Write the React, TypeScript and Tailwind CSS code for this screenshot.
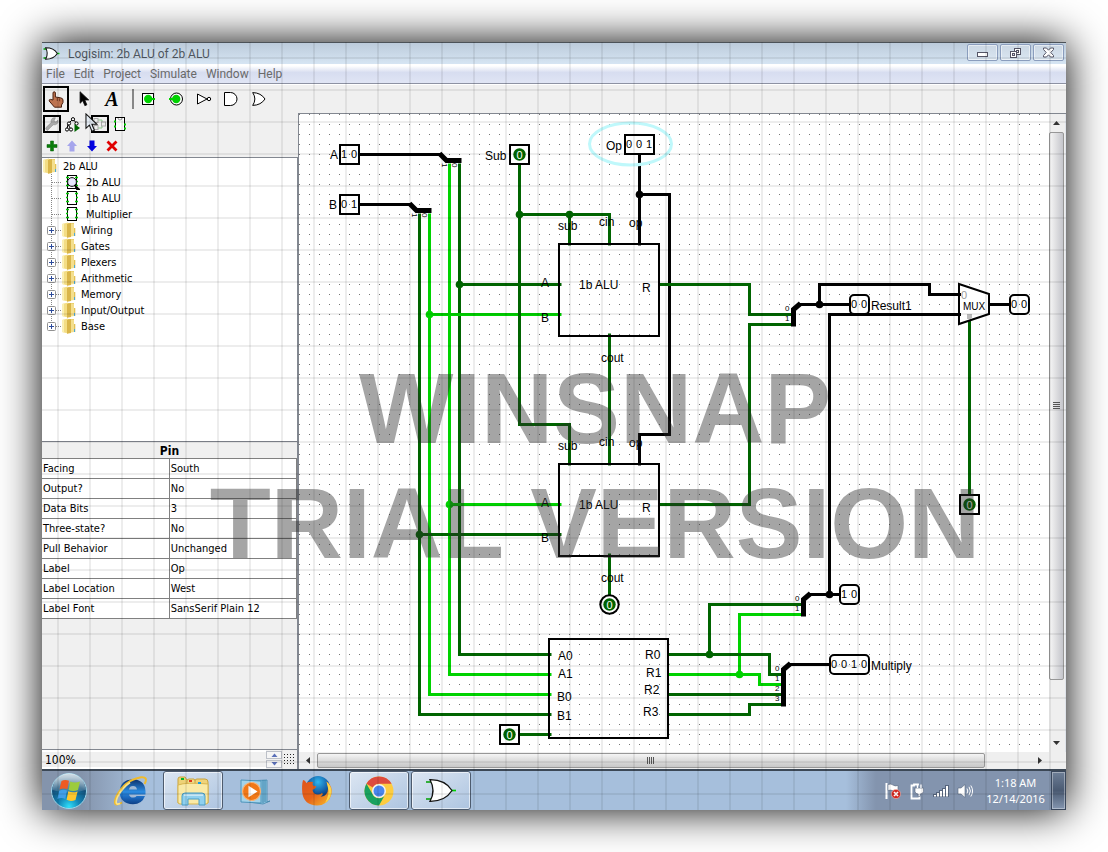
import type { ReactNode } from "react";

const DARK = "#006400";
const BRIGHT = "#00d200";

/* ---------- small icons ---------- */

function GateIcon({ className, weight = 1.3 }: { className?: string; weight?: number }) {
  return (
    <svg viewBox="0 0 32 24" className={className} aria-hidden="true">
      <path d="M1 3.5h6M1 20.5h6" stroke="#00a000" strokeWidth={weight * 1.3} />
      <path d="M26 12h5" stroke="#00d200" strokeWidth={weight * 1.3} />
      <path d="M5 1.2 Q20 1 27 12 Q20 23 5 22.8 Q11 12 5 1.2Z" fill="#fff" stroke="#111" strokeWidth={weight} />
    </svg>
  );
}

function Folder() {
  return (
    <svg width="14" height="16" viewBox="0 0 14 16" aria-hidden="true">
      <path d="M0 2 L6 0.5 V15.5 L0 14Z" fill="#f3dd85" />
      <path d="M0 2 L2 1.5 V14.5 L0 14Z" fill="#fbf0b4" />
      <path d="M6 1 H12 V13 H6Z" fill="#e9cc66" />
      <path d="M5 2 L9 1 V15 L5 15.8Z" fill="#d9b549" />
      <path d="M9 1.5 L12 2 V14 L9 14.6Z" fill="#f4df8e" />
      <path d="M12 6h1.3v8H12z" fill="#e2c055" />
      <path d="M12 11h1v3h-1z" fill="#4aa8d8" />
    </svg>
  );
}

function ChipIcon({ viewed }: { viewed?: boolean }) {
  return (
    <svg width="16" height="16" viewBox="0 0 16 16" aria-hidden="true">
      <path d="M4 1.5h9M4 14.5h9" stroke="#000" />
      <path d="M3.5 1v14M12.5 1v14" stroke="#000" />
      <path d="M2 3.5h3M11 3.5h3M2 7.5h2M12 7.5h2M2 11.5h3M11 11.5h3" stroke="#00c800" strokeWidth="1.4" />
      {viewed && (
        <>
          <circle cx="8" cy="8" r="4.4" fill="#e8e8ff" stroke="#111" />
          <path d="M10.5 11 L13 15.8 H16Z" fill="#000" stroke="#000" strokeWidth="1.2" />
        </>
      )}
    </svg>
  );
}

function HandIcon() {
  return (
    <svg width="16" height="17" viewBox="0 0 16 17" aria-hidden="true">
      <path
        d="M5 9 V2 Q5 0.8 6.2 0.8 Q7.4 0.8 7.4 2 V6 L12.5 6.8 Q15 7.3 15 9 V11.5 L13.5 14 V16.2 H6.5 L1.2 10 Q0.8 8.3 2.6 8.4Z"
        fill="#bd7350"
        stroke="#4a2010"
        strokeWidth="1"
      />
      <path d="M9.3 7v3M11.6 7.4v2.8" stroke="#5c2a17" strokeWidth="0.8" />
    </svg>
  );
}

function ArrowCursor({ fill, size }: { fill: string; size: "s" | "l" }) {
  return (
    <svg
      className={size === "s" ? "h-[16px] w-[11px]" : "h-[20px] w-[13px]"}
      viewBox="0 0 11 17"
      aria-hidden="true"
    >
      <path
        d="M0.8 0.8 V13 L3.7 10.3 L5.9 15.6 L8 14.7 L5.8 9.5 H10Z"
        fill={fill}
        stroke="#111"
        strokeWidth="0.9"
      />
    </svg>
  );
}

function PinIcon({ output }: { output?: boolean }) {
  return (
    <svg width="16" height="16" viewBox="0 0 16 16" aria-hidden="true">
      {output ? (
        <circle cx="8.5" cy="8" r="6" fill="#fff" stroke="#000" />
      ) : (
        <rect x="2.5" y="2.5" width="11" height="11" fill="#fff" stroke="#000" />
      )}
      <circle cx="8.2" cy="8" r="4.2" fill={BRIGHT} />
      <path d={output ? "M1 8h4" : "M11 8h4"} stroke={BRIGHT} strokeWidth="2" />
    </svg>
  );
}

function NotIcon() {
  return (
    <svg width="16" height="14" viewBox="0 0 16 14" aria-hidden="true">
      <path d="M1.5 2 V12 L11 7Z" fill="#fff" stroke="#000" />
      <circle cx="13" cy="7" r="1.7" fill="#fff" stroke="#000" />
    </svg>
  );
}

function AndIcon() {
  return (
    <svg width="16" height="14" viewBox="0 0 16 14" aria-hidden="true">
      <path d="M1 0.5 H6.5 A6.5 6.5 0 0 1 6.5 13.5 H0.5 V0.5Z" fill="#fff" stroke="#000" />
    </svg>
  );
}

function OrIcon() {
  return (
    <svg width="16" height="14" viewBox="0 0 16 14" aria-hidden="true">
      <path d="M0.7 0.6 Q9 0.8 13 7 Q9 13.2 0.7 13.4 Q5 7 0.7 0.6Z" fill="#fff" stroke="#000" />
    </svg>
  );
}

function WrenchIcon() {
  return (
    <svg width="14" height="14" viewBox="0 0 14 14" aria-hidden="true">
      <path
        d="M13 3.2 L10.8 5 L9 3.6 L10.4 0.8 Q6.5 0.4 6 4.2 L6.2 5.6 L0.8 10.8 Q0.2 12.6 2.4 13.4 L8.2 7.8 Q13.2 8.4 13 3.2Z"
        fill="#aaa"
        stroke="#888"
        strokeWidth="0.6"
      />
    </svg>
  );
}

function SimTreeIcon() {
  return (
    <svg width="15" height="15" viewBox="0 0 15 15" aria-hidden="true">
      <path d="M8 2 L3 7 L2 12 M3 7 L5.5 12 M8 2 L12 7" stroke="#000" fill="none" />
      <g fill="#fff" stroke="#000">
        <circle cx="8" cy="2.2" r="1.6" />
        <circle cx="4" cy="6.5" r="1.6" />
        <circle cx="11.5" cy="6.5" r="1.6" />
        <circle cx="2" cy="12.5" r="1.6" />
        <circle cx="6" cy="12.5" r="1.6" />
      </g>
      <path d="M9.5 7 L15 11 L9.5 15Z" fill="#006800" />
    </svg>
  );
}

function LayoutIcon() {
  return (
    <svg width="14" height="14" viewBox="0 0 14 14" aria-hidden="true">
      <path d="M4 3h5v4h4M4 11h5V7" stroke="#8cc88c" fill="none" />
      <g fill="#eee" stroke="#aaa">
        <rect x="1" y="1.5" width="4" height="4" />
        <rect x="1" y="8.5" width="4" height="4" />
        <rect x="8.5" y="5" width="4" height="4" />
      </g>
    </svg>
  );
}

function AppearanceIcon() {
  return (
    <svg width="14" height="14" viewBox="0 0 14 14" aria-hidden="true">
      <rect x="2.5" y="0.5" width="9" height="13" fill="#fff" stroke="#000" />
      <path d="M5 1 a2 2 0 0 0 4 0" fill="none" stroke="#999" />
      <path d="M1 4.5h2M1 9.5h2M11 7.5h2M11 11.5h2" stroke={BRIGHT} strokeWidth="2" />
    </svg>
  );
}

/* ---------- chrome ---------- */

function CaptionButton({ label, children }: { label: string; children: ReactNode }) {
  return (
    <button
      aria-label={label}
      className="flex h-[17px] w-[31px] items-center justify-center rounded-xs border border-[#8a9dbd] bg-white/20 shadow-[inset_0_0_0_1px_rgba(255,255,255,0.5)]"
    >
      {children}
    </button>
  );
}

function TitleBar() {
  return (
    <header className="flex h-[22px] items-start justify-between border-t border-[#4c5258] bg-linear-to-b from-[#bccbdb] to-[#d6e5f3] pr-[2px] pl-px">
      <div className="flex h-[21px] items-center gap-2">
        <GateIcon className="h-[15px] w-[17px]" weight={2} />
        <h1 className="text-[12px] leading-4 text-[#4f565e]">Logisim: 2b ALU of 2b ALU</h1>
      </div>
      <div className="flex gap-[2px] pt-px">
        <CaptionButton label="Minimize">
          <svg width="13" height="11" viewBox="0 0 13 11">
            <rect x="1.5" y="5.5" width="10" height="4" fill="#fff" stroke="#556" />
          </svg>
        </CaptionButton>
        <CaptionButton label="Restore">
          <svg width="13" height="12" viewBox="0 0 13 12">
            <rect x="5.5" y="1.5" width="6" height="6" fill="#fff" stroke="#556" />
            <rect x="7.5" y="3.5" width="2" height="2" fill="none" stroke="#556" />
            <rect x="1.5" y="4.5" width="6" height="6" fill="#fff" stroke="#556" />
            <rect x="3.5" y="6.5" width="2" height="2" fill="#dde" stroke="#556" />
          </svg>
        </CaptionButton>
        <CaptionButton label="Close">
          <svg width="13" height="11" viewBox="0 0 13 11">
            <path
              d="M1.5 1 H4.5 L6.5 3.2 L8.5 1 H11.5 V2.5 L8.8 5.5 L11.5 8.5 V10 H8.5 L6.5 7.8 L4.5 10 H1.5 V8.5 L4.2 5.5 L1.5 2.5Z"
              fill="#fff"
              stroke="#556"
            />
          </svg>
        </CaptionButton>
      </div>
    </header>
  );
}

const MENUS = ["File", "Edit", "Project", "Simulate", "Window", "Help"];

function MenuBar() {
  return (
    <nav className="flex h-[20px] items-center gap-[9px] border-b border-[#8d92a3] bg-linear-to-b from-white from-10% via-[#d7ddf0] via-45% to-[#e0e5f5] pl-1">
      {MENUS.map((m) => (
        <button key={m} className="text-[12px] leading-4 text-[#6a6a6a]">
          {m}
        </button>
      ))}
    </nav>
  );
}

function Tool({ label, selected, children }: { label: string; selected?: boolean; children: ReactNode }) {
  return (
    <div className="flex w-7 justify-center">
      <button
        aria-label={label}
        className={
          "flex size-[26px] items-center justify-center " + (selected ? "border-2 border-black" : "")
        }
      >
        {children}
      </button>
    </div>
  );
}

function ToolBar() {
  return (
    <div className="flex h-[29px] items-center border-t border-white bg-[#f0f0f0]">
      <Tool label="Poke tool" selected>
        <HandIcon />
      </Tool>
      <Tool label="Edit tool">
        <ArrowCursor fill="#000" size="s" />
      </Tool>
      <Tool label="Text tool">
        <span className="font-['Liberation_Serif',serif] text-[20px] leading-5 font-bold italic">A</span>
      </Tool>
      <div className="flex w-2 justify-end">
        <div className="h-5 w-[2px] bg-[#888]" />
      </div>
      <Tool label="Input pin">
        <PinIcon />
      </Tool>
      <Tool label="Output pin">
        <PinIcon output />
      </Tool>
      <Tool label="NOT gate">
        <NotIcon />
      </Tool>
      <Tool label="AND gate">
        <AndIcon />
      </Tool>
      <Tool label="OR gate">
        <OrIcon />
      </Tool>
    </div>
  );
}

function SmallTool({ label, selected, children }: { label: string; selected?: boolean; children: ReactNode }) {
  return (
    <button
      aria-label={label}
      className={"flex size-[18px] items-center justify-center " + (selected ? "border-2 border-black" : "")}
    >
      {children}
    </button>
  );
}

function ExplorerTools() {
  return (
    <div className="bg-[#f0f0f0]">
      <div className="relative flex h-[22px] items-center gap-[2px] pl-px">
        <SmallTool label="Show toolbox" selected>
          <WrenchIcon />
        </SmallTool>
        <SmallTool label="Show simulation tree">
          <SimTreeIcon />
        </SmallTool>
        <div className="w-[6px]" />
        <SmallTool label="Edit circuit layout" selected>
          <LayoutIcon />
        </SmallTool>
        <SmallTool label="Edit appearance">
          <AppearanceIcon />
        </SmallTool>
        <div className="absolute top-0 left-[43px]">
          <ArrowCursor fill="#e4ecf4" size="l" />
        </div>
      </div>
      <div className="flex h-[22px] items-center gap-[2px] pl-px">
        <SmallTool label="Add circuit">
          <svg width="12" height="12" viewBox="0 0 12 12">
            <path d="M4.5 1h3v3.5H11v3H7.5V11h-3V7.5H1v-3h3.5z" fill="#0a7d0a" stroke="#075f07" strokeWidth="0.5" />
          </svg>
        </SmallTool>
        <SmallTool label="Move up">
          <svg width="12" height="12" viewBox="0 0 12 12">
            <path d="M6 0.5 L11 6 H8.5 V11.5 H3.5 V6 H1Z" fill="#a5a5ec" />
          </svg>
        </SmallTool>
        <SmallTool label="Move down">
          <svg width="12" height="12" viewBox="0 0 12 12">
            <path d="M6 11.5 L11 6 H8.5 V0.5 H3.5 V6 H1Z" fill="#0000e0" />
          </svg>
        </SmallTool>
        <SmallTool label="Remove circuit">
          <svg width="12" height="12" viewBox="0 0 12 12">
            <path d="M1.5 1.5 L10.5 10.5 M10.5 1.5 L1.5 10.5" stroke="#e00000" strokeWidth="2.8" />
          </svg>
        </SmallTool>
      </div>
    </div>
  );
}

function Connector({ expandable, last }: { expandable?: boolean; last?: boolean }) {
  return (
    <svg width="16" height="16" viewBox="0 0 16 16" aria-hidden="true">
      <path d={last ? "M5.5 0V8" : "M5.5 0V16"} stroke="#888" strokeDasharray="1 1" />
      <path d="M6 8.5H16" stroke="#888" strokeDasharray="1 1" />
      {expandable && (
        <>
          <rect x="1.5" y="4.5" width="8" height="8" rx="1" fill="#fff" stroke="#919191" />
          <path d="M3 8.5H8M5.5 6V11" stroke="#2b4a9b" />
        </>
      )}
    </svg>
  );
}

const CIRCUITS = ["2b ALU", "1b ALU", "Multiplier"];
const LIBRARIES = ["Wiring", "Gates", "Plexers", "Arithmetic", "Memory", "Input/Output", "Base"];

function ExplorerTree() {
  return (
    <div className="h-[284px] border-t border-r border-[#828790] bg-white pl-px">
      <div className="flex h-4 items-center gap-[6px]">
        <Folder />
        <span className="pt-[2px]">2b ALU</span>
      </div>
      <ul className="pl-[3px]">
        {CIRCUITS.map((c, i) => (
          <li key={c} className="flex h-4 items-center">
            <Connector />
            <span className="flex w-6 justify-center pr-1">
              <ChipIcon viewed={i === 0} />
            </span>
            <span className="pt-[2px]">{c}</span>
          </li>
        ))}
        {LIBRARIES.map((c, i) => (
          <li key={c} className="flex h-4 items-center">
            <Connector expandable last={i === LIBRARIES.length - 1} />
            <span className="flex w-[19px]">
              <Folder />
            </span>
            <span className="pt-[2px]">{c}</span>
          </li>
        ))}
      </ul>
    </div>
  );
}

const ATTRS: [string, string][] = [
  ["Facing", "South"],
  ["Output?", "No"],
  ["Data Bits", "3"],
  ["Three-state?", "No"],
  ["Pull Behavior", "Unchanged"],
  ["Label", "Op"],
  ["Label Location", "West"],
  ["Label Font", "SansSerif Plain 12"],
];

function AttributePanel() {
  return (
    <div className="flex-1 border-t border-r border-[#828790] bg-[#f0f0f0]">
      <h2 className="h-4 text-center text-[12px] leading-[18px] font-bold">Pin</h2>
      <table className="w-full table-fixed border-collapse bg-white">
        <tbody>
          {ATTRS.map(([k, v]) => (
            <tr key={k} className="h-5 border-y border-[#808080]">
              <th scope="row" className="border-r border-[#808080] p-0 pl-px text-left font-normal">
                {k}
              </th>
              <td className="border-r border-[#808080] p-0 pl-px">{v}</td>
            </tr>
          ))}
        </tbody>
      </table>
    </div>
  );
}

function ZoomControl() {
  return (
    <div className="flex h-5 items-stretch border-t border-[#828790] bg-[#f0f0f0]">
      <input
        aria-label="Zoom"
        defaultValue="100%"
        className="min-w-0 flex-1 border-y-2 border-white bg-[#f0f0f0] pl-[3px] text-[12px] leading-4"
      />
      <div className="flex w-4 flex-col justify-center gap-px">
        <button aria-label="Zoom in" className="flex h-2 items-center justify-center border border-[#bcc0c8] bg-[#f5f5f5]">
          <svg width="7" height="4" viewBox="0 0 7 4">
            <path d="M0.5 4 L3.5 0.5 L6.5 4Z" fill="#5a6fb8" />
          </svg>
        </button>
        <button aria-label="Zoom out" className="flex h-2 items-center justify-center border border-[#bcc0c8] bg-[#f5f5f5]">
          <svg width="7" height="4" viewBox="0 0 7 4">
            <path d="M0.5 0 L3.5 3.5 L6.5 0Z" fill="#5a6fb8" />
          </svg>
        </button>
      </div>
      <button aria-label="Show grid" className="flex w-4 items-center justify-center border-r border-[#828790]">
        <svg width="13" height="11" viewBox="0 0 13 11">
          {[0, 1, 2, 3].map((r) =>
            [0, 1, 2, 3].map((c) => <rect key={r * 5 + c} x={1 + c * 3} y={r * 3} width="1" height="1" fill="#222" />)
          )}
        </svg>
      </button>
    </div>
  );
}

/* ---------- circuit ---------- */

function Wire({ d, c = "#000", w = 3 }: { d: string; c?: string; w?: number }) {
  return <path d={d} stroke={c} strokeWidth={w} fill="none" />;
}

function Value({ x, y, bits, round }: { x: number; y: number; bits: string; round?: boolean }) {
  return (
    <g>
      <rect
        x={x + 1}
        y={y + 1}
        width={bits.length * 10 - 1}
        height="19"
        rx={round ? 4 : 0}
        fill="none"
        stroke="#000"
        strokeWidth="2"
      />
      {bits.split("").map((b, i) => (
        <text key={i} x={x + 5 + i * 10} y={y + 14} textAnchor="middle" fontSize="11">
          {b}
        </text>
      ))}
    </g>
  );
}

function BitPin({ x, y, output }: { x: number; y: number; output?: boolean }) {
  return (
    <g>
      {output ? (
        <circle cx={x} cy={y} r="9.2" fill="#fff" stroke="#000" strokeWidth="2" />
      ) : (
        <rect x={x - 9.5} y={y - 9.5} width="19" height="19" fill="none" stroke="#000" strokeWidth="2" />
      )}
      <circle cx={x} cy={y} r="6.2" fill={DARK} />
      <text x={x} y={y + 4} textAnchor="middle" fill="#fff" fontSize="11">
        0
      </text>
    </g>
  );
}

function Alu({ y }: { y: number }) {
  return (
    <g>
      <rect x="559" y={y} width="100" height="92" fill="none" stroke="#000" strokeWidth="2" />
      <text x="558" y={y - 14}>sub</text>
      <text x="599" y={y - 18}>cin</text>
      <text x="629" y={y - 17}>op</text>
      <text x="541" y={y + 43}>A</text>
      <text x="541" y={y + 78}>B</text>
      <text x="579" y={y + 45}>1b ALU</text>
      <text x="642" y={y + 48}>R</text>
      <text x="601" y={y + 118}>cout</text>
    </g>
  );
}

function Dot({ x, y, c }: { x: number; y: number; c: string }) {
  return <circle cx={x} cy={y} r="3.8" fill={c} />;
}

function Circuit() {
  return (
    <svg
      className="h-full w-full bg-white font-['Liberation_Sans',Arial,sans-serif]"
      fontSize="12"
      role="img"
      aria-label="2b ALU circuit"
    >
      <defs>
        <pattern id="dots" width="10" height="10" patternUnits="userSpaceOnUse">
          <rect x="0" y="0" width="1" height="1" fill="#777" />
        </pattern>
      </defs>
      <rect width="743" height="100%" fill="url(#dots)" />
      <g transform="translate(-299 -114)">
        <g transform="translate(0.5 0.5)">
          <Wire d="M359 154H440" />
          <Wire d="M359 204H410" />
          <Wire d="M439 153L446 160H461" w={5} />
          <Wire d="M409 203L416 210H431" w={5} />
          <Wire d="M459 163V654H551" c={DARK} />
          <Wire d="M449 163V674H551" c={BRIGHT} />
          <Wire d="M429 213V694H551" c={BRIGHT} />
          <Wire d="M419 213V714H551" c={DARK} />
          <Wire d="M459 284H561" c={DARK} />
          <Wire d="M429 314H561" c={BRIGHT} />
          <Wire d="M449 504H561" c={BRIGHT} />
          <Wire d="M419 534H561" c={DARK} />
          <Wire d="M519 164V424H569V465" c={DARK} />
          <Wire d="M519 214H609V245" c={DARK} />
          <Wire d="M569 214V245" c={DARK} />
          <Wire d="M609 333V465" c={DARK} />
          <Wire d="M609 553V595" c={DARK} />
          <Wire d="M639 154V245" />
          <Wire d="M639 194H669V434H639V465" />
          <Wire d="M658 284H749V314H792" c={DARK} />
          <Wire d="M658 504H749V324H792" c={DARK} />
          <Wire d="M793 326V309L800 303" w={5} />
          <Wire d="M798 304H849" />
          <Wire d="M819 304V284H929V294H960" />
          <Wire d="M960 314H829V594" />
          <Wire d="M989 304H1009" />
          <Wire d="M969 320V494" c={DARK} />
          <Wire d="M709 654V604H802" c={DARK} />
          <Wire d="M739 674V614H802" c={BRIGHT} />
          <Wire d="M803 616V599L810 593" w={5} />
          <Wire d="M808 594H839" />
          <Wire d="M668 654H769V674H782" c={DARK} />
          <Wire d="M668 674H759V684H782" c={BRIGHT} />
          <Wire d="M668 694H782" c={DARK} />
          <Wire d="M668 714H749V704H782" c={DARK} />
          <Wire d="M783 706V669L790 663" w={5} />
          <Wire d="M788 664H829" />
          <Wire d="M519 734H551" c={DARK} />
          <Dot x={459} y={284} c={DARK} />
          <Dot x={429} y={314} c={BRIGHT} />
          <Dot x={449} y={504} c={BRIGHT} />
          <Dot x={419} y={534} c={DARK} />
          <Dot x={519} y={214} c={DARK} />
          <Dot x={569} y={214} c={DARK} />
          <Dot x={639} y={194} c="#000" />
          <Dot x={819} y={304} c="#000" />
          <Dot x={829} y={594} c="#000" />
          <Dot x={709} y={654} c={DARK} />
          <Dot x={739} y={674} c={BRIGHT} />
        </g>
        <ellipse cx="630.5" cy="144" rx="41" ry="21" fill="none" stroke="#bff8fb" strokeWidth="3" />
        <Alu y={244} />
        <Alu y={464} />
        <rect x="549" y="639" width="119" height="99" fill="none" stroke="#000" strokeWidth="2" />
        <path d="M959 284L989 294V314L959 324Z" fill="#fff" stroke="#000" strokeWidth="2" />
        <Wire d="M958 294.5H961M958 314.5H961" />
        <rect x="967" y="314" width="5" height="5" fill="#bbb" />
        <text x="961" y="299" fill="#999" fontSize="11">0</text>
        <text x="963" y="310" fontSize="10">MUX</text>
        <Value x={339} y={144} bits="10" />
        <Value x={339} y={194} bits="01" />
        <Value x={624} y={134} bits="001" />
        <Value x={849} y={294} bits="00" round />
        <Value x={1009} y={294} bits="00" round />
        <Value x={839} y={584} bits="10" round />
        <Value x={829} y={654} bits="0010" round />
        <BitPin x={519.5} y={154.5} />
        <BitPin x={969.5} y={504.5} />
        <BitPin x={509.5} y={734.5} />
        <BitPin x={609.5} y={604.5} output />
        <text x="330" y="159">A</text>
        <text x="329" y="209">B</text>
        <text x="485" y="160">Sub</text>
        <text x="606" y="150">Op</text>
        <text x="871" y="310">Result1</text>
        <text x="871" y="670">Multiply</text>
        <text x="558" y="660">A0</text>
        <text x="558" y="678">A1</text>
        <text x="557" y="701">B0</text>
        <text x="557" y="720">B1</text>
        <text x="645" y="659">R0</text>
        <text x="646" y="677">R1</text>
        <text x="644" y="694">R2</text>
        <text x="643" y="716">R3</text>
        <g fontSize="8">
          <text transform="translate(442 163) rotate(90)">1</text>
          <text transform="translate(452 163) rotate(90)">0</text>
          <text transform="translate(412 213) rotate(90)">1</text>
          <text transform="translate(422 213) rotate(90)">0</text>
          <text x="785" y="311">0</text>
          <text x="785" y="321">1</text>
          <text x="795" y="601">0</text>
          <text x="795" y="611">1</text>
          <text x="775" y="671">0</text>
          <text x="775" y="681">1</text>
          <text x="775" y="691">2</text>
          <text x="775" y="701">3</text>
        </g>
      </g>
    </svg>
  );
}

/* ---------- scroll bars ---------- */

function VScroll() {
  return (
    <div className="flex w-[17px] flex-col border-r border-[#dfe3ea] bg-[#efefef] pr-px">
      <button aria-label="Scroll up" className="flex h-[18px] items-center justify-center">
        <svg width="7" height="4" viewBox="0 0 7 4">
          <path d="M0 4 L3.5 0 L7 4Z" fill="#333" />
        </svg>
      </button>
      <div className="flex-1">
        <div className="flex h-[91%] items-center justify-center rounded-xs border border-[#979797] bg-linear-to-r from-[#f5f5f5] via-[#e2e2e4] via-40% to-[#c4c5cb]">
          <div className="flex flex-col gap-px">
            <div className="h-px w-[7px] bg-[#555]" />
            <div className="h-px w-[7px] bg-[#555]" />
            <div className="h-px w-[7px] bg-[#555]" />
            <div className="h-px w-[7px] bg-[#555]" />
          </div>
        </div>
      </div>
      <button aria-label="Scroll down" className="flex h-[18px] items-center justify-center">
        <svg width="7" height="4" viewBox="0 0 7 4">
          <path d="M0 0 L3.5 4 L7 0Z" fill="#333" />
        </svg>
      </button>
    </div>
  );
}

function HScroll() {
  return (
    <div className="flex h-[17px] bg-[#efefef] pt-px pr-[17px] pb-px">
      <button aria-label="Scroll left" className="flex w-[18px] items-center justify-center">
        <svg width="4" height="7" viewBox="0 0 4 7">
          <path d="M4 0 L0 3.5 L4 7Z" fill="#333" />
        </svg>
      </button>
      <div className="flex-1">
        <div className="flex h-full w-[93.5%] items-center justify-center rounded-xs border border-[#979797] bg-linear-to-b from-[#f5f5f5] via-[#dcdcdc] via-50% to-[#c8c8c8]">
          <div className="flex gap-px">
            <div className="h-[7px] w-px bg-[#555]" />
            <div className="h-[7px] w-px bg-[#555]" />
            <div className="h-[7px] w-px bg-[#555]" />
            <div className="h-[7px] w-px bg-[#555]" />
          </div>
        </div>
      </div>
      <button aria-label="Scroll right" className="flex w-[18px] items-center justify-center">
        <svg width="4" height="7" viewBox="0 0 4 7">
          <path d="M0 0 L4 3.5 L0 7Z" fill="#333" />
        </svg>
      </button>
    </div>
  );
}

/* ---------- task bar ---------- */

function StartOrb() {
  return (
    <svg width="38" height="38" viewBox="0 0 38 38" aria-hidden="true">
      <defs>
        <radialGradient id="orb" cx="50%" cy="95%" r="85%">
          <stop offset="0" stopColor="#2fe0fb" />
          <stop offset="0.35" stopColor="#1387b8" />
          <stop offset="0.75" stopColor="#14507a" />
          <stop offset="1" stopColor="#4b7a9a" />
        </radialGradient>
        <linearGradient id="orbTop" x1="0" y1="0" x2="0" y2="1">
          <stop offset="0" stopColor="#fff" stopOpacity="0.75" />
          <stop offset="1" stopColor="#fff" stopOpacity="0.1" />
        </linearGradient>
      </defs>
      <circle cx="19" cy="19" r="17.5" fill="url(#orb)" stroke="#9fd4e8" strokeWidth="1" />
      <path d="M2.5 18 A16.5 16.5 0 0 1 35.5 18 Q19 23 2.5 18Z" fill="url(#orbTop)" />
      <path d="M11.5 9 Q15 7 19 8.8 L17.3 17.2 Q13.5 15.5 9.5 17.5Z" fill="#ee5a24" />
      <path d="M20.3 9.5 Q24.5 11.5 30 9.6 L28 18 Q23 20 18.6 18Z" fill="#9ccc3c" />
      <path d="M9.2 18.8 Q13 17 17 18.5 L15.3 27 Q11.5 25.2 7.3 27Z" fill="#3f9fe8" />
      <path d="M18.3 19.2 Q22.5 21.3 27.6 19.4 L25.5 28 Q20.5 30 16.6 27.8Z" fill="#fdc72e" />
    </svg>
  );
}

function IeIcon() {
  return (
    <svg width="34" height="32" viewBox="0 0 34 32" aria-hidden="true">
      <defs>
        <linearGradient id="ie" x1="0" y1="0" x2="0" y2="1">
          <stop offset="0" stopColor="#0c2f6a" />
          <stop offset="0.5" stopColor="#2b8be0" />
          <stop offset="0.75" stopColor="#1a66bb" />
          <stop offset="1" stopColor="#0d3f86" />
        </linearGradient>
      </defs>
      <path
        d="M31.5 19.5 H15 Q15.6 22.6 19.2 22.6 Q21.6 22.6 22.6 21 H31 Q28 29.2 19 29.2 Q6 28.6 5.6 17 Q6 5 18.8 4.2 Q32.5 4.8 31.5 19.5Z M15 14.4 H23 Q22.4 11 19 11 Q15.6 11 15 14.4Z"
        fill="url(#ie)"
        fillRule="evenodd"
      />
      <path d="M8 27.5 Q-2.5 33.5 2.6 21 Q11 5 27 2.2 Q34.5 1.5 30.6 9" fill="none" stroke="#efbb2c" strokeWidth="2" />
      <path d="M6 28.6 Q0 31 3.5 22 Q8 13 16 7.5" fill="none" stroke="#f9e38a" strokeWidth="1.6" />
    </svg>
  );
}

function ExplorerIcon() {
  return (
    <svg width="34" height="32" viewBox="0 0 34 32" aria-hidden="true">
      <path d="M2 4 Q2 2 4 2 H9 L11 5 H13 V28 H2Z" fill="#eed277" stroke="#c9a33d" />
      <path d="M11 6 Q11 4 13 4 H18 L20 7 H23 V28 H11Z" fill="#f3dc8b" stroke="#c9a33d" />
      <path d="M19 6 Q19 4 21 4 H29 Q32 4 32 7 V28 H19Z" fill="#efd37a" stroke="#c9a33d" />
      <path d="M2 10 Q10 7 32 9 V27 Q32 29 30 29 H4 Q2 29 2 27Z" fill="#faeaa6" stroke="#d8b650" />
      <rect x="5" y="3" width="3" height="2" fill="#00b52a" />
      <rect x="13" y="5" width="3" height="2" fill="#e23a1a" />
      <rect x="22" y="7" width="3" height="2" fill="#139fe6" />
      <path d="M6 30 V21 Q6 18 9 18 H26 Q29 18 29 21 V30 H23 V24 H12 V30Z" fill="#8fd0ee" stroke="#4a9ec6" />
      <path d="M8 20h19" stroke="#d7f1fc" strokeWidth="1.5" />
    </svg>
  );
}

function PlayerIcon() {
  return (
    <svg width="32" height="28" viewBox="0 0 32 28" aria-hidden="true">
      <path d="M10 4 L28 3 V25 L31 24 L24 27 L10 25Z" fill="#8cc3df" stroke="#4288ad" strokeWidth="0.8" />
      <path d="M24 3v23M26 3v22" stroke="#3d86ae" />
      <path d="M2 3 L22 4 V26 L2 25Z" fill="#a3d3ea" stroke="#4d94ba" />
      <circle cx="12.5" cy="14.5" r="9" fill="#f07818" stroke="#fbb171" strokeWidth="1.2" />
      <path d="M9.5 8.8 L18.5 14.5 L9.5 20.3Z" fill="#fff" />
    </svg>
  );
}

function FirefoxIcon() {
  return (
    <svg width="32" height="32" viewBox="0 0 32 32" aria-hidden="true">
      <defs>
        <radialGradient id="globe" cx="50%" cy="25%" r="75%">
          <stop offset="0" stopColor="#2fb6ee" />
          <stop offset="0.55" stopColor="#1560a8" />
          <stop offset="1" stopColor="#0a2352" />
        </radialGradient>
        <linearGradient id="fox" x1="0" y1="0" x2="1" y2="1">
          <stop offset="0" stopColor="#e0531a" />
          <stop offset="0.5" stopColor="#e5641a" />
          <stop offset="1" stopColor="#fbc02c" />
        </linearGradient>
      </defs>
      <circle cx="17" cy="13" r="12" fill="url(#globe)" />
      <path
        d="M2 5 Q4 5 5.5 8 Q8 6 12 7 Q11 8.5 12 10.5 L15.5 11.5 Q14 14 11.5 14.8 Q12 19 16 19.5 Q19 20 21 18 Q23 19.5 19.5 21.5 Q24 22 26.5 17 Q28 12 25.5 6.5 Q32 11 30.5 19 Q28 30 16 30.5 Q3 30 1.3 18 Q0.6 10 2 5Z"
        fill="url(#fox)"
      />
      <path d="M25.5 6.5 Q31 11 30.3 18 Q29 25 24 28 Q29 19 26.8 12Z" fill="#fbd64a" />
    </svg>
  );
}

function ChromeIcon() {
  return (
    <svg width="30" height="30" viewBox="-15 -15 30 30" aria-hidden="true">
      <circle r="14.5" fill="#fdcc40" />
      <path d="M-12.56 -7.25 A14.5 14.5 0 0 1 12.56 -7.25 H0 A7 7 0 0 0 -6.1 -3.5Z" fill="#dd4b3e" />
      <path d="M-12.56 -7.25 A14.5 14.5 0 0 0 0 14.5 L6.2 3.6 A7 7 0 0 1 -6.2 3.6Z" fill="#1aa15f" />
      <circle r="7" fill="#f4f4f4" />
      <circle r="5.5" fill="#4a86ee" />
    </svg>
  );
}

function TaskButton({ label, active, children }: { label: string; active?: boolean; children: ReactNode }) {
  return (
    <button
      aria-label={label}
      className={
        "flex h-[39px] w-[60px] items-center justify-center rounded-[3px] " +
        (active
          ? "border border-[#4d5b6e] bg-linear-to-br from-[#dce6f2] to-[#adc4e0] shadow-[inset_0_0_0_1px_rgba(255,255,255,0.6)]"
          : "")
      }
    >
      {children}
    </button>
  );
}

function Tray() {
  return (
    <div className="flex h-full items-center">
      <div className="flex items-center gap-2">
        <svg width="16" height="18" viewBox="0 0 16 18" aria-label="Action Center">
          <path d="M1.5 1V17" stroke="#fff" strokeWidth="2" />
          <path d="M3 2.5 Q6 1.5 8 3 T13 3.5 V9 Q10 10 8 8.8 T3 8.5Z" fill="#fff" stroke="#56657d" strokeWidth="0.6" />
          <circle cx="11" cy="12" r="4.6" fill="#d22a22" stroke="#f3b5ae" strokeWidth="0.6" />
          <path d="M9 10l4 4M13 10l-4 4" stroke="#fff" strokeWidth="1.6" />
        </svg>
        <svg width="16" height="18" viewBox="0 0 16 18" aria-label="Power">
          <path d="M9 3.5V2.5H5V3.5H2.5V16.5H10.5V14" fill="none" stroke="#fff" strokeWidth="1.8" />
          <path d="M6 6 H14.5 V9.5 Q14 12 11.2 12 V14.5 H9.2 V12 Q6.4 12 6 9.5Z" fill="#fff" stroke="#56657d" strokeWidth="0.6" />
          <path d="M8.5 6V2.5M12 6V2.5" stroke="#fff" strokeWidth="1.4" />
        </svg>
        <svg width="16" height="14" viewBox="0 0 16 14" aria-label="Network">
          <path
            d="M0 10h3v3H0zM3 8h3v5H3zM6 6h3v7H6zM9 4h3v9H9zM12 1h4v12h-4z"
            fill="#56657d"
          />
          <path d="M1 11h2v1.5H1zM4 9h2v3.5H4zM7 7h2v5.5H7zM10 5h2v7.5h-2zM13 2h2v10.5h-2z" fill="#fff" />
        </svg>
        <svg width="16" height="16" viewBox="0 0 16 16" aria-label="Volume">
          <path d="M1 5 H4 L8 1.5 V14.5 L4 11 H1Z" fill="#fff" stroke="#56657d" strokeWidth="0.6" />
          <path d="M10 5.5q1.6 2.5 0 5M12 3.8q2.8 4.2 0 8.4M13.8 2.5q3.6 5.5 0 11" fill="none" stroke="#fff" />
        </svg>
      </div>
      <time className="ml-[7px] w-[71px] text-center font-['Noto_Sans','Open_Sans',sans-serif] text-[11px] leading-4 text-white">
        1:18 AM
        <br />
        12/14/2016
      </time>
      <button
        aria-label="Show desktop"
        className="h-[39px] w-[15px] border border-[#39475c] bg-linear-to-b from-[#6e7f97] via-[#4a5a72] to-[#8496b0] shadow-[inset_0_0_0_1px_rgba(255,255,255,0.35)]"
      />
    </div>
  );
}

function TaskBar() {
  return (
    <footer className="flex h-[41px] items-center justify-between border-t-2 border-[#3c4856] bg-[linear-gradient(to_right,#8494ac_0,#8494ac_40px,#a6bfdc_100px,#a6bfdc_calc(100%-220px),#8394ae_calc(100%-190px))]">
      <div className="flex items-center">
        <button aria-label="Start" className="flex w-[59px] pl-[8px]">
          <StartOrb />
        </button>
        <div className="flex gap-[2px]">
          <TaskButton label="Internet Explorer">
            <IeIcon />
          </TaskButton>
          <TaskButton label="Windows Explorer" active>
            <ExplorerIcon />
          </TaskButton>
          <TaskButton label="Windows Media Player">
            <PlayerIcon />
          </TaskButton>
          <TaskButton label="Firefox">
            <FirefoxIcon />
          </TaskButton>
          <TaskButton label="Chrome" active>
            <ChromeIcon />
          </TaskButton>
          <TaskButton label="Logisim" active>
            <GateIcon className="h-[25px] w-[32px]" />
          </TaskButton>
        </div>
      </div>
      <Tray />
    </footer>
  );
}

function Watermark() {
  return (
    <div className="pointer-events-none absolute inset-0 flex items-center justify-center overflow-hidden bg-[linear-gradient(to_right,transparent_15px,rgba(0,0,0,0.07)_15px,rgba(0,0,0,0.07)_17px,transparent_17px),linear-gradient(to_bottom,transparent_15px,rgba(0,0,0,0.07)_15px,rgba(0,0,0,0.07)_17px,transparent_17px)] bg-size-[32px_32px] pt-20 pl-[82px]">
      <p className="text-center font-['Liberation_Sans',Arial,sans-serif] text-[100px] leading-[115px] font-bold whitespace-nowrap text-[rgba(40,40,40,0.42)]">
        WINSNAP
        <br />
        TRIAL VERSION
      </p>
    </div>
  );
}

export default function App() {
  return (
    <div className="flex min-h-screen flex-col bg-white p-[42px] font-[Roboto,'Open_Sans',sans-serif]">
      <div className="relative flex flex-1 flex-col shadow-[0_0_40px_#000]">
        <TitleBar />
        <MenuBar />
        <ToolBar />
        <main className="flex flex-1 font-['DejaVu_Sans_Condensed','Open_Sans',sans-serif] text-[11px] leading-4 text-black">
          <aside className="flex w-64 shrink-0 flex-col bg-[#f0f0f0]">
            <ExplorerTools />
            <ExplorerTree />
            <AttributePanel />
            <ZoomControl />
          </aside>
          <section className="flex min-w-0 flex-1 flex-col border-t border-l border-[#828790]">
            <div className="flex flex-1">
              <div className="min-w-0 flex-1">
                <Circuit />
              </div>
              <VScroll />
            </div>
            <HScroll />
          </section>
        </main>
        <TaskBar />
        <Watermark />
      </div>
    </div>
  );
}
